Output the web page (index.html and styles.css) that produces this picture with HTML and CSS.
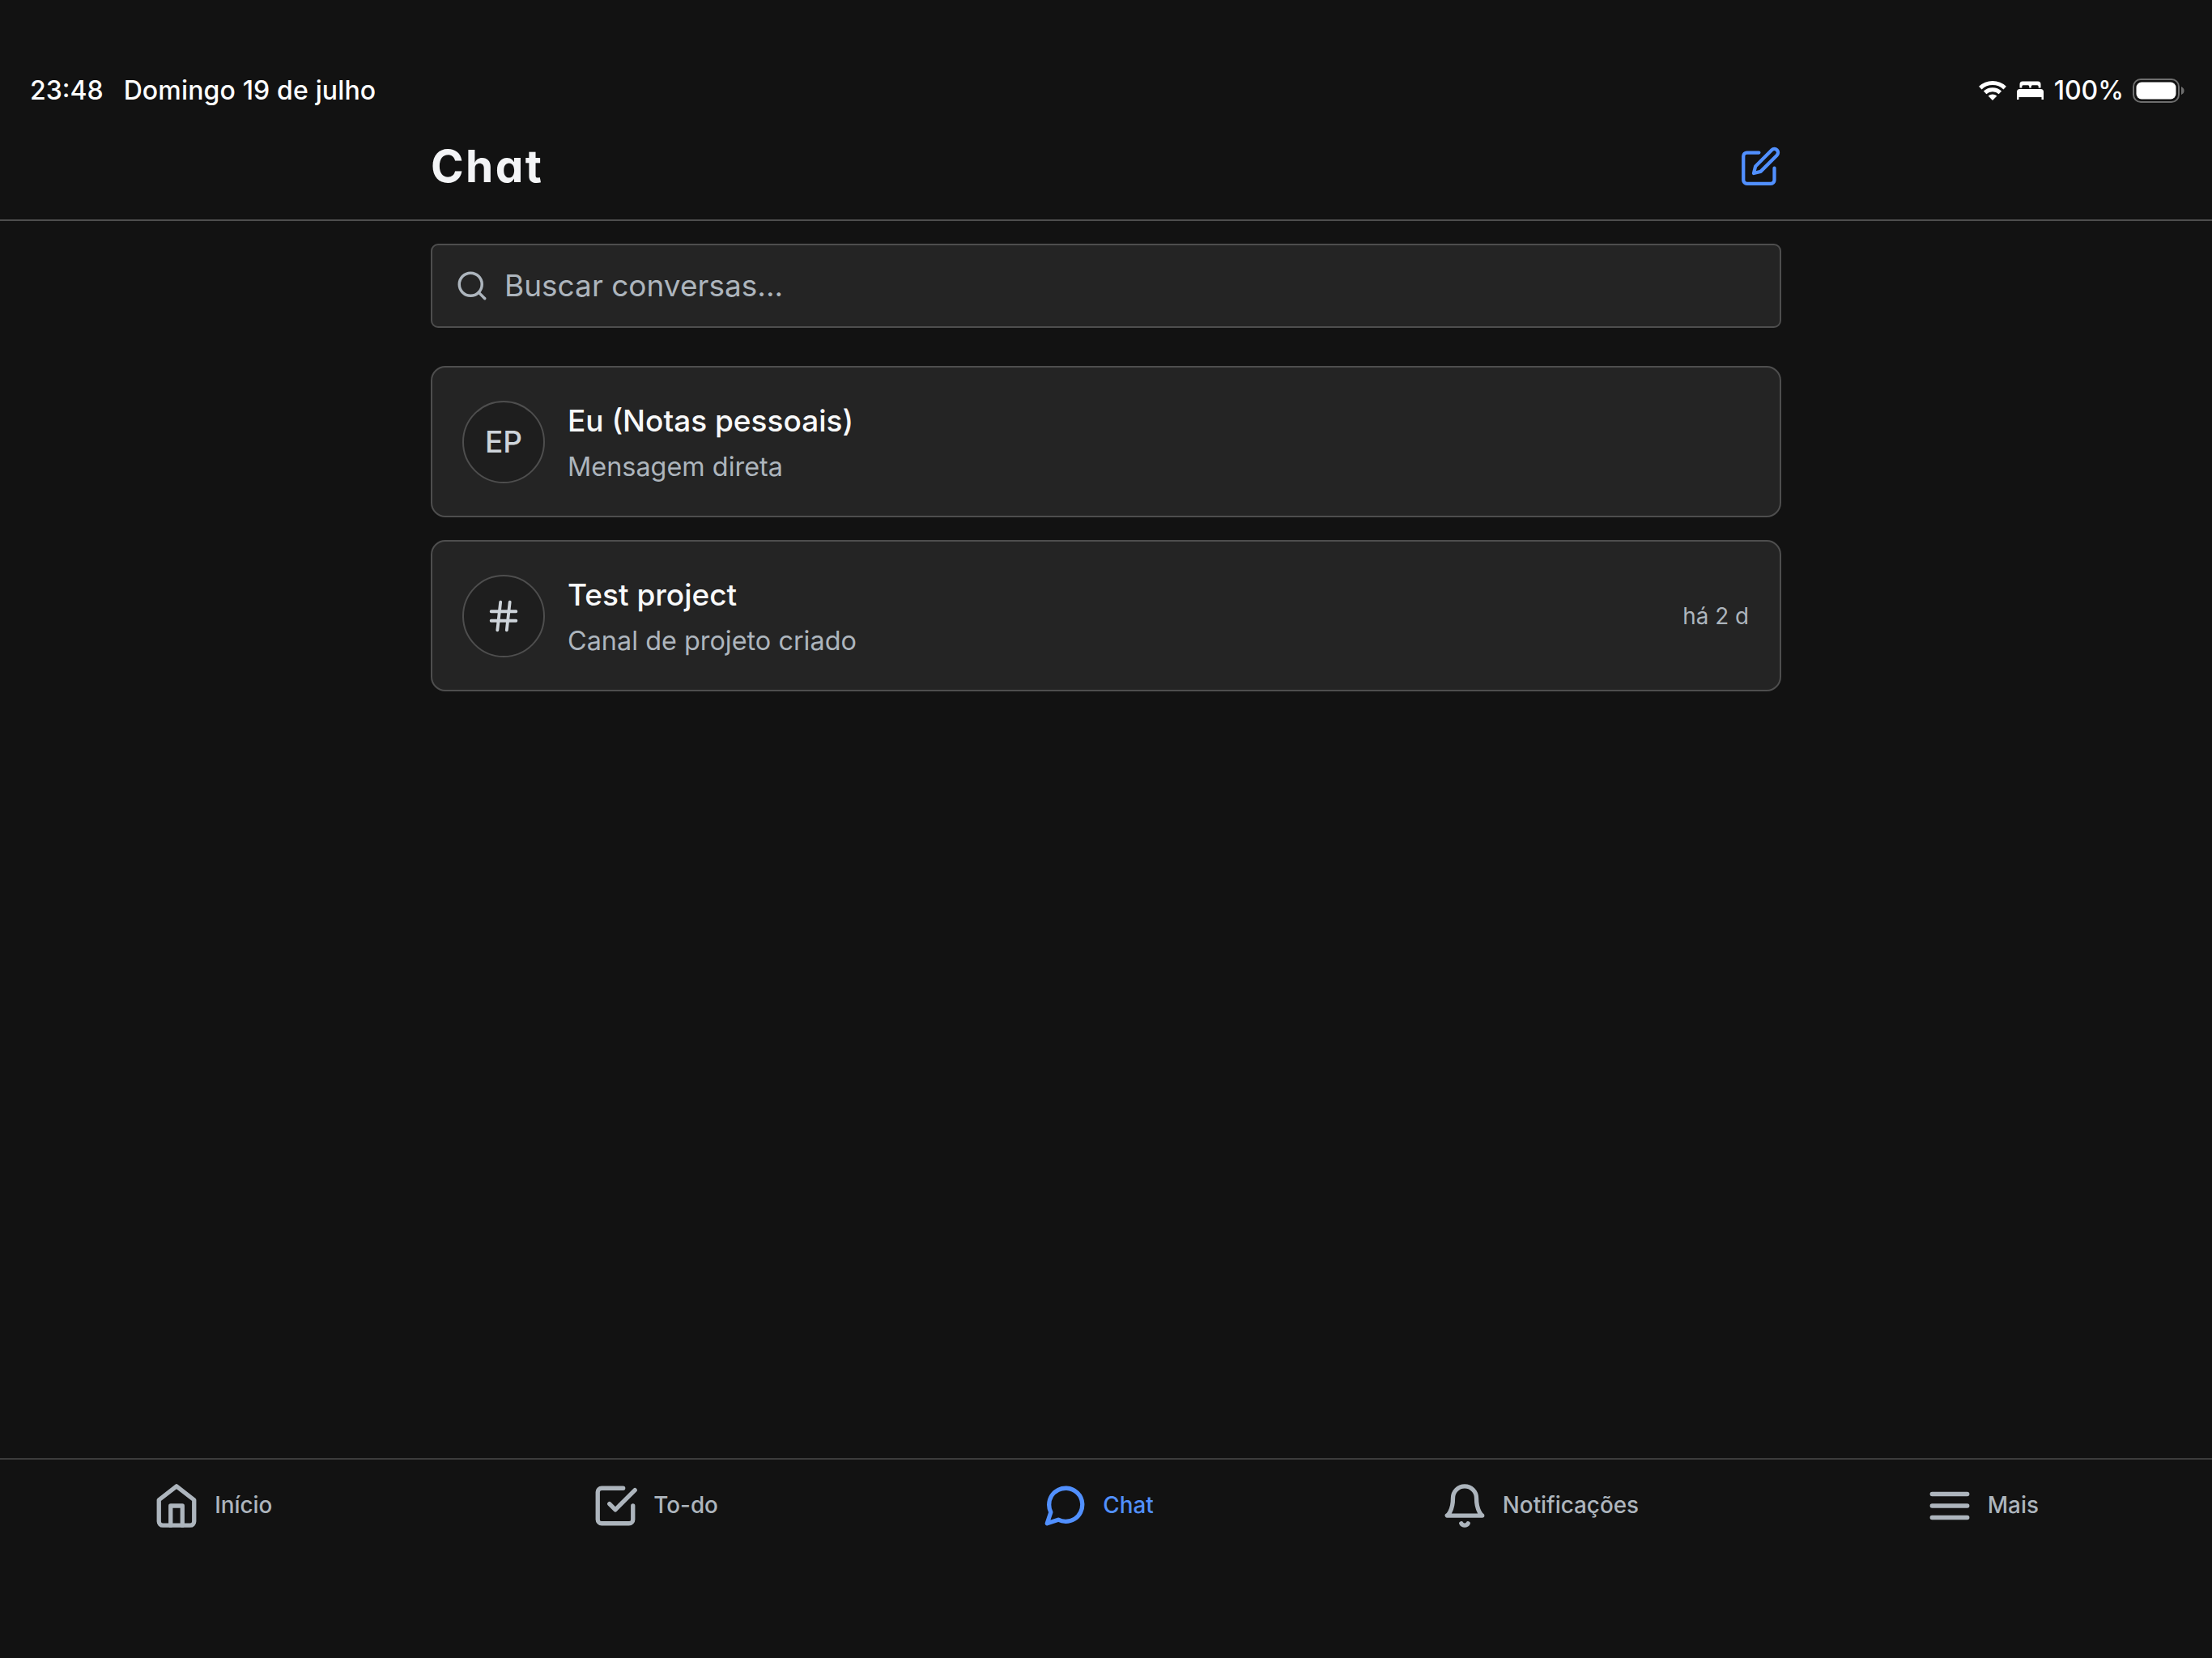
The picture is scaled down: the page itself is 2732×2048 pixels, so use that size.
FILE: index.html
```html
<!DOCTYPE html>
<html lang="pt-BR">
<head>
  <meta charset="UTF-8">
  <meta name="viewport" content="width=device-width, initial-scale=1.0">
  <title>Chat</title>
  <link rel="stylesheet" href="styles.css">
</head>
<body>
  <div class="status-bar">
    <div class="status-left">
      <span class="time">23:48</span>
      <span class="date">Domingo 19 de julho</span>
    </div>
    <div class="status-right">
      <svg class="wifi" viewBox="0 0 34 24" fill="none" stroke="#fff">
        <path d="M1.8 8.6a22 22 0 0 1 30.4 0" stroke-width="5"/>
        <path d="M7.6 14.4a13.6 13.6 0 0 1 18.8 0" stroke-width="5"/>
        <path d="M17 24l-5.4-5.4a7.8 7.8 0 0 1 10.8 0z" fill="#fff" stroke="none"/>
      </svg>
      <svg class="bed" viewBox="0 0 33 24" fill="#fff">
        <path d="M3.5 8.5V4a3.5 3.5 0 0 1 3.5-3.5h19a3.5 3.5 0 0 1 3.5 3.5v4.5h-2.8v-1.7a1.5 1.5 0 0 0-1.5-1.5h-6a1.5 1.5 0 0 0-1.5 1.5v1.7h-2.4v-1.7a1.5 1.5 0 0 0-1.5-1.5h-6a1.5 1.5 0 0 0-1.5 1.5v1.7z"/>
        <path d="M0 23V13.5a3.5 3.5 0 0 1 3.5-3.5h26a3.5 3.5 0 0 1 3.5 3.5V23h-2.5v-3h-28v3z"/>
      </svg>
      <span class="percent">100%</span>
      <svg class="battery" viewBox="0 0 66 30">
        <rect x="1" y="1" width="56" height="28" rx="9" fill="none" stroke="#6e6e6e" stroke-width="2"/>
        <rect x="4.5" y="4.5" width="49" height="21" rx="6.5" fill="#fff"/>
        <path d="M60 10v10c2.5-1 3.6-3 3.6-5s-1.1-4-3.6-5z" fill="#6e6e6e"/>
      </svg>
    </div>
  </div>

  <header class="header">
    <div class="container header-row">
      <h1>Chat</h1>
      <svg class="icon icon-edit" viewBox="0 0 24 24">
        <path d="M11 4H4a2 2 0 0 0-2 2v14a2 2 0 0 0 2 2h14a2 2 0 0 0 2-2v-7"/>
        <path d="M18.5 2.5a2.121 2.121 0 0 1 3 3L12 15l-4 1 1-4 9.5-9.5z"/>
      </svg>
    </div>
  </header>

  <main class="container">
    <div class="search">
      <svg class="icon icon-search" viewBox="0 0 24 24">
        <circle cx="11" cy="11" r="8"/>
        <path d="M21 21l-4.35-4.35"/>
      </svg>
      <span class="search-text">Buscar conversas...</span>
    </div>

    <div class="chat-list">
      <div class="chat-card">
        <div class="avatar">EP</div>
        <div class="chat-info">
          <span class="chat-name">Eu (Notas pessoais)</span>
          <span class="chat-preview">Mensagem direta</span>
        </div>
      </div>
      <div class="chat-card">
        <div class="avatar">
          <svg class="icon icon-hash" viewBox="0 0 24 24">
            <path d="M4 9h16M4 15h16M10 3L8 21M16 3l-2 18"/>
          </svg>
        </div>
        <div class="chat-info">
          <span class="chat-name">Test project</span>
          <span class="chat-preview">Canal de projeto criado</span>
        </div>
        <span class="chat-time">há 2 d</span>
      </div>
    </div>
  </main>

  <nav class="tab-bar">
    <a class="tab">
      <svg class="icon icon-tab" viewBox="0 0 24 24">
        <path d="M3 9l9-7 9 7v11a2 2 0 0 1-2 2H5a2 2 0 0 1-2-2z"/>
        <path d="M9 22V12h6v10"/>
      </svg>
      <span>Início</span>
    </a>
    <a class="tab">
      <svg class="icon icon-tab" viewBox="0 0 24 24">
        <path d="M9 11l3 3L22 4"/>
        <path d="M21 12v7a2 2 0 0 1-2 2H5a2 2 0 0 1-2-2V5a2 2 0 0 1 2-2h11"/>
      </svg>
      <span>To-do</span>
    </a>
    <a class="tab active">
      <svg class="icon icon-tab" viewBox="0 0 24 24">
        <path d="M21 11.5a8.38 8.38 0 0 1-.9 3.8 8.5 8.5 0 0 1-7.6 4.7 8.38 8.38 0 0 1-3.8-.9L3 21l1.9-5.7a8.38 8.38 0 0 1-.9-3.8 8.5 8.5 0 0 1 4.7-7.6 8.38 8.38 0 0 1 3.8-.9h.5a8.48 8.48 0 0 1 8 8v.5z"/>
      </svg>
      <span>Chat</span>
    </a>
    <a class="tab">
      <svg class="icon icon-tab" viewBox="0 0 24 24">
        <path d="M18 8A6 6 0 0 0 6 8c0 7-3 9-3 9h18s-3-2-3-9"/>
        <path d="M13.73 21a2 2 0 0 1-3.46 0"/>
      </svg>
      <span>Notificações</span>
    </a>
    <a class="tab">
      <svg class="icon icon-tab" viewBox="0 0 24 24">
        <path d="M3 6h18M3 12h18M3 18h18"/>
      </svg>
      <span>Mais</span>
    </a>
  </nav>
</body>
</html>
```

FILE: styles.css
```css
* {
  box-sizing: border-box;
}

body {
  margin: 0;
  height: 2048px;
  display: flex;
  flex-direction: column;
  overflow: hidden;
  background-color: #121212;
  color: #f8f9fa;
  font-family: Inter, "Liberation Sans", sans-serif;
}

.container {
  margin: 0 532px;
}

.icon {
  display: block;
  flex: none;
  fill: none;
  stroke: currentColor;
  stroke-width: 2;
  stroke-linecap: round;
  stroke-linejoin: round;
}

/* status bar */
.status-bar {
  height: 142px;
  padding: 81px 32px 0 37px;
  display: flex;
  justify-content: space-between;
  color: #fff;
  font-size: 32px;
  font-weight: 500;
  line-height: 61px;
}

.status-left {
  display: flex;
  gap: 25px;
}

.date {
  letter-spacing: 0.15px;
}

.status-right {
  display: flex;
  align-items: center;
}

.wifi {
  width: 34px;
  height: 24px;
  margin-right: 13px;
}

.bed {
  width: 33px;
  height: 24px;
  margin-right: 13px;
}

.battery {
  width: 66px;
  height: 30px;
  margin-left: 11px;
}

/* header */
.header {
  height: 131px;
  border-bottom: 2px solid #4e4e4e;
}

.header-row {
  height: 126px;
  display: flex;
  justify-content: space-between;
  align-items: center;
}

h1 {
  margin: 0;
  font-size: 55px;
  font-weight: 700;
  line-height: 72px;
  letter-spacing: 2.4px;
  font-feature-settings: "cv11";
  color: #f3f4f6;
}

.icon-edit {
  width: 51px;
  height: 51px;
  color: #5190ff;
}

/* search */
.search {
  height: 104px;
  margin-top: 28px;
  padding: 0 28px;
  display: flex;
  align-items: center;
  gap: 19px;
  border: 2px solid #4e4e4e;
  border-radius: 9px;
  background-color: #242424;
  color: #adb5bd;
}

.icon-search {
  width: 42px;
  height: 42px;
}

.search-text {
  padding-bottom: 2px;
  font-size: 37px;
}

/* conversations */
.chat-list {
  margin-top: 47px;
  display: flex;
  flex-direction: column;
  gap: 28px;
}

.chat-card {
  height: 187px;
  padding: 0 38px 0 37px;
  display: flex;
  align-items: center;
  gap: 28px;
  border: 2px solid #4e4e4e;
  border-radius: 18px;
  background-color: #242424;
}

.avatar {
  width: 102px;
  height: 102px;
  display: flex;
  align-items: center;
  justify-content: center;
  border: 2px solid #4e4e4e;
  border-radius: 50%;
  background-color: #1e1e1e;
  color: #ced4da;
  font-size: 37px;
  font-weight: 500;
}

.icon-hash {
  width: 46px;
  height: 46px;
}

.chat-info {
  flex: 1;
  padding-top: 2px;
  display: flex;
  flex-direction: column;
}

.chat-name {
  font-size: 37px;
  font-weight: 500;
  line-height: 59px;
}

.chat-preview {
  font-size: 32.4px;
  line-height: 55px;
  color: #adb5bd;
}

.chat-time {
  font-size: 27.8px;
  color: #adb5bd;
}

/* bottom tabs */
.tab-bar {
  height: 247px;
  margin-top: auto;
  display: flex;
  border-top: 2px solid #3c3c3c;
}

.tab {
  flex: 1 1 0;
  height: 114px;
  padding-right: 21px;
  display: flex;
  align-items: center;
  justify-content: center;
  gap: 18px;
  color: #adb5bd;
  font-size: 27.8px;
  font-weight: 500;
}

.tab span {
  padding-bottom: 2px;
}

.tab.active {
  color: #5190ff;
}

.icon-tab {
  width: 58px;
  height: 58px;
  stroke-width: 2.2;
}
```
